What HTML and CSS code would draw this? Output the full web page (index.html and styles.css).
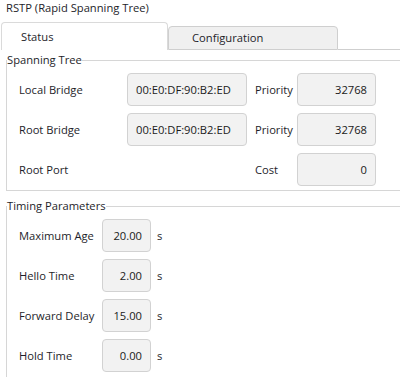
FILE: index.html
```html
<!DOCTYPE html>
<html lang="en">
<head>
  <meta charset="UTF-8">
  <meta name="viewport" content="width=device-width, initial-scale=1.0">
  <title>RSTP (Rapid Spanning Tree)</title>
  <link rel="stylesheet" href="styles.css">
</head>
<body>
  <div class="panel-title">RSTP (Rapid Spanning Tree)</div>

  <!-- Pestañas -->
  <div class="tab-bar">
    <div class="tab tab-active">Status</div>
    <div class="tab">Configuration</div>
    <div class="tab-fill"></div>
  </div>

  <!-- Spanning Tree -->
  <fieldset class="group">
    <legend>Spanning Tree</legend>
    <div class="tree-grid">
      <span class="label">Local Bridge</span>
      <div class="field">00:E0:DF:90:B2:ED</div>
      <span class="label">Priority</span>
      <div class="field field-num">32768</div>

      <span class="label">Root Bridge</span>
      <div class="field">00:E0:DF:90:B2:ED</div>
      <span class="label">Priority</span>
      <div class="field field-num">32768</div>

      <span class="label">Root Port</span>
      <span></span>
      <span class="label">Cost</span>
      <div class="field field-num">0</div>
    </div>
  </fieldset>

  <!-- Timing Parameters -->
  <fieldset class="group group-last">
    <legend>Timing Parameters</legend>
    <div class="timing-grid">
      <span class="label">Maximum Age</span>
      <div class="field field-num">20.00</div>
      <span class="label">s</span>

      <span class="label">Hello Time</span>
      <div class="field field-num">2.00</div>
      <span class="label">s</span>

      <span class="label">Forward Delay</span>
      <div class="field field-num">15.00</div>
      <span class="label">s</span>

      <span class="label">Hold Time</span>
      <div class="field field-num">0.00</div>
      <span class="label">s</span>
    </div>
  </fieldset>
</body>
</html>
```

FILE: styles.css
```css
/* General */
* {
  margin: 0;
  padding: 0;
  box-sizing: border-box;
}

body {
  background-color: #fff;
  color: #1e1e2a;
  font-family: "Open Sans", "Noto Sans", sans-serif;
  font-size: 11.2px;
  line-height: 16px;
  overflow: hidden;
  height: 377px;
}

.panel-title {
  padding-left: 6px;
  height: 16px;
}

/* Pestañas */
.tab-bar {
  display: flex;
  align-items: flex-end;
  margin-top: 6px;
  padding-left: 1px;
  height: 28px;
}

.tab {
  width: 170px;
  height: 24px;
  padding: 3px 0 0 23px;
  background-color: #f0f0f0;
  border: 1px solid #cfcfcf;
  border-radius: 4px 4px 0 0;
}

.tab-active {
  width: 167px;
  height: 28px;
  padding: 6px 0 0 19px;
  background-color: #fff;
  border-color: #dadada;
  border-bottom: none;
}

.tab-fill {
  flex: 1;
  border-bottom: 1px solid #cfcfcf;
}

/* Grupos */
.group {
  margin: 2px -10px 0 6px;
  padding: 0;
  border: 1px solid #d6d6d6;
}

.group legend {
  padding: 0;
  line-height: 16px;
}

.group-last {
  margin-top: 7px;
  border-bottom: none;
}

.tree-grid {
  display: grid;
  grid-template-columns: 100px 120px 34px 79px;
  grid-auto-rows: 33px;
  column-gap: 8px;
  row-gap: 7px;
  align-items: center;
  padding: 5px 0 4px 12px;
}

.timing-grid {
  display: grid;
  grid-template-columns: 77px 49px auto;
  grid-auto-rows: 33px;
  column-gap: 6px;
  row-gap: 7px;
  align-items: center;
  padding: 5px 0 10px 12px;
}

/* Campos */
.field {
  height: 33px;
  padding: 0 8px;
  display: flex;
  align-items: center;
  background-color: #f2f2f2;
  border: 1px solid #d2d2d2;
  border-radius: 4px;
  color: #1a1a1a;
  white-space: nowrap;
}

.field-num {
  justify-content: flex-end;
}
```
